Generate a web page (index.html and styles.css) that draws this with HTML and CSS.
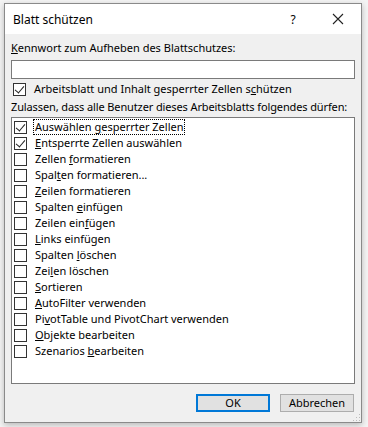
FILE: index.html
```html
<!DOCTYPE html>
<html>
<head>
<meta charset="utf-8">
<link rel="stylesheet" href="styles.css">
</head>
<body>
<div class="dialog">
  <div class="titlebar">
    <span class="title">Blatt schützen</span>
    <span class="help">?</span>
    <span class="close"><svg width="12" height="12" viewBox="0 0 12 12"><path d="M1 1L11 11M11 1L1 11" stroke="#222" stroke-width="1.1" fill="none"/></svg></span>
  </div>
  <div class="content">
    <div class="label"><u>K</u>ennwort zum Aufheben des Blattschutzes:</div>
    <div class="input"></div>
    <div class="row protect"><span class="cb checked"></span><span>Arbeitsblatt und Inhalt gesperrter Zellen s<u>c</u>hützen</span></div>
    <div class="label allow">Zulassen, dass alle Benutzer dieses Arbeitsblatts folgendes dürfen:</div>
    <div class="list">
      <div class="row item"><span class="cb checked"></span><span class="focus">Auswählen <u>g</u>esperrter Zellen</span></div>
      <div class="row item"><span class="cb checked"></span><span><u>E</u>ntsperrte Zellen auswählen</span></div>
      <div class="row item"><span class="cb"></span><span>Zellen <u>f</u>ormatieren</span></div>
      <div class="row item"><span class="cb"></span><span>Spal<u>t</u>en formatieren...</span></div>
      <div class="row item"><span class="cb"></span><span><u>Z</u>eilen formatieren</span></div>
      <div class="row item"><span class="cb"></span><span>Spalten <u>e</u>infügen</span></div>
      <div class="row item"><span class="cb"></span><span>Zeilen ein<u>f</u>ügen</span></div>
      <div class="row item"><span class="cb"></span><span><u>L</u>inks einfügen</span></div>
      <div class="row item"><span class="cb"></span><span>Spalten <u>l</u>öschen</span></div>
      <div class="row item"><span class="cb"></span><span>Zei<u>l</u>en löschen</span></div>
      <div class="row item"><span class="cb"></span><span><u>S</u>ortieren</span></div>
      <div class="row item"><span class="cb"></span><span><u>A</u>utoFilter verwenden</span></div>
      <div class="row item"><span class="cb"></span><span>Pi<u>v</u>otTable und PivotChart verwenden</span></div>
      <div class="row item"><span class="cb"></span><span><u>O</u>bjekte bearbeiten</span></div>
      <div class="row item"><span class="cb"></span><span>Szenarios <u>b</u>earbeiten</span></div>
    </div>
    <div class="buttons">
      <div class="btn default">OK</div>
      <div class="btn">Abbrechen</div>
    </div>
  </div>
  <div class="grip"></div>
</div>
</body>
</html>
```

FILE: styles.css
```css
html, body {
  margin: 0;
  padding: 0;
  background: #f4f4f4;
  width: 368px;
  height: 427px;
  overflow: hidden;
}
body {
  font-family: "Noto Sans", "DejaVu Sans", sans-serif;
  font-size: 11px;
  color: #000;
}
.dialog {
  position: relative;
  margin: 3px 0 0 4px;
  width: 356px;
  height: 418px;
  border: 1px solid #8a8a8a;
  background: #f0f0f0;
  box-shadow: 0 2px 6px rgba(0,0,0,0.25);
}
.titlebar {
  height: 30px;
  background: #fff;
  display: flex;
  align-items: center;
}
.title {
  margin-left: 8px;
  font-size: 12px;
  flex: 1;
}
.help {
  font-size: 12px;
  width: 44px;
  text-align: center;
}
.close {
  width: 46px;
  display: flex;
  justify-content: center;
}
.content {
  padding: 0 6px 0 6px;
}
u { text-decoration: underline; text-underline-offset: 1px; }
.label {
  height: 16px;
  line-height: 16px;
  margin-top: 6px;
  white-space: nowrap;
}
.input {
  margin-top: 4px;
  height: 17px;
  background: #fff;
  border: 1px solid #7a7a7a;
}
.row {
  display: flex;
  align-items: center;
  height: 16px;
  line-height: 16px;
  white-space: nowrap;
}
.protect {
  margin-top: 2px;
}
.allow {
  margin-top: 2px;
  letter-spacing: -0.12px;
}
.cb {
  width: 11px;
  height: 11px;
  border: 1px solid #333;
  background: #fff;
  margin: 0 8px 0 2px;
  flex: none;
  position: relative;
}
.cb.checked::after {
  content: "";
  position: absolute;
  left: 3px;
  top: 0px;
  width: 4px;
  height: 8px;
  border-right: 1px solid #222;
  border-bottom: 1px solid #222;
  transform: rotate(40deg);
}
.list {
  margin-top: 2px;
  height: 267px;
  background: #fff;
  border: 1px solid #7a7a7a;
  padding-top: 1px;
  box-sizing: border-box;
}
.focus {
  outline: 1px dotted #000;
  outline-offset: 0;
  padding: 0 1px;
  margin-left: -1px;
  line-height: 14px;
}
.buttons {
  display: flex;
  justify-content: flex-end;
  gap: 10px;
  margin-top: 10px;
  padding-right: 1px;
}
.btn {
  width: 72px;
  height: 16px;
  line-height: 16px;
  text-align: center;
  background: #e1e1e1;
  border: 1px solid #adadad;
}
.btn.default {
  border: 2px solid #0078d7;
  width: 70px;
  height: 14px;
  line-height: 14px;
}
.grip {
  position: absolute;
  right: 1px;
  bottom: 1px;
  width: 8px;
  height: 8px;
  background-image: radial-gradient(circle, #bbb 0.8px, transparent 1px);
  background-size: 3px 3px;
  clip-path: polygon(100% 0, 100% 100%, 0 100%);
}
```
